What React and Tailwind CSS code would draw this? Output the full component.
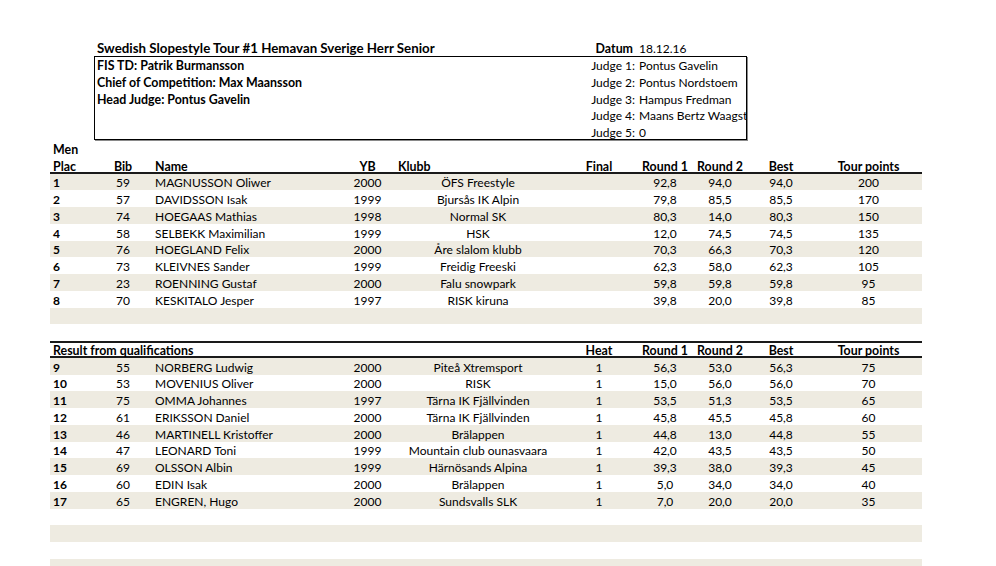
import React from 'react';

const COLS = 'grid grid-cols-[44px_58px_188px_55px_166px_76px_56px_54px_68px_107px]';
const ROW_H = 'h-[16.75px]';
const SHADE = 'bg-[#eeebe1]';

// Final round results
const finalRows = [
  { plac: 1, bib: 59, name: 'MAGNUSSON Oliwer', yb: 2000, club: 'ÖFS Freestyle', r1: '92,8', r2: '94,0', best: '94,0', pts: 200 },
  { plac: 2, bib: 57, name: 'DAVIDSSON Isak', yb: 1999, club: 'Bjursås IK Alpin', r1: '79,8', r2: '85,5', best: '85,5', pts: 170 },
  { plac: 3, bib: 74, name: 'HOEGAAS Mathias', yb: 1998, club: 'Normal SK', r1: '80,3', r2: '14,0', best: '80,3', pts: 150 },
  { plac: 4, bib: 58, name: 'SELBEKK Maximilian', yb: 1999, club: 'HSK', r1: '12,0', r2: '74,5', best: '74,5', pts: 135 },
  { plac: 5, bib: 76, name: 'HOEGLAND Felix', yb: 2000, club: 'Åre slalom klubb', r1: '70,3', r2: '66,3', best: '70,3', pts: 120 },
  { plac: 6, bib: 73, name: 'KLEIVNES Sander', yb: 1999, club: 'Freidig Freeski', r1: '62,3', r2: '58,0', best: '62,3', pts: 105 },
  { plac: 7, bib: 23, name: 'ROENNING Gustaf', yb: 2000, club: 'Falu snowpark', r1: '59,8', r2: '59,8', best: '59,8', pts: 95 },
  { plac: 8, bib: 70, name: 'KESKITALO Jesper', yb: 1997, club: 'RISK kiruna', r1: '39,8', r2: '20,0', best: '39,8', pts: 85 },
];

// Qualification results
const qualRows = [
  { plac: 9, bib: 55, name: 'NORBERG Ludwig', yb: 2000, club: 'Piteå Xtremsport', heat: 1, r1: '56,3', r2: '53,0', best: '56,3', pts: 75 },
  { plac: 10, bib: 53, name: 'MOVENIUS Oliver', yb: 2000, club: 'RISK', heat: 1, r1: '15,0', r2: '56,0', best: '56,0', pts: 70 },
  { plac: 11, bib: 75, name: 'OMMA Johannes', yb: 1997, club: 'Tärna IK Fjällvinden', heat: 1, r1: '53,5', r2: '51,3', best: '53,5', pts: 65 },
  { plac: 12, bib: 61, name: 'ERIKSSON Daniel', yb: 2000, club: 'Tärna IK Fjällvinden', heat: 1, r1: '45,8', r2: '45,5', best: '45,8', pts: 60 },
  { plac: 13, bib: 46, name: 'MARTINELL Kristoffer', yb: 2000, club: 'Brälappen', heat: 1, r1: '44,8', r2: '13,0', best: '44,8', pts: 55 },
  { plac: 14, bib: 47, name: 'LEONARD Toni', yb: 1999, club: 'Mountain club ounasvaara', heat: 1, r1: '42,0', r2: '43,5', best: '43,5', pts: 50 },
  { plac: 15, bib: 69, name: 'OLSSON Albin', yb: 1999, club: 'Härnösands Alpina', heat: 1, r1: '39,3', r2: '38,0', best: '39,3', pts: 45 },
  { plac: 16, bib: 60, name: 'EDIN Isak', yb: 2000, club: 'Brälappen', heat: 1, r1: '5,0', r2: '34,0', best: '34,0', pts: 40 },
  { plac: 17, bib: 65, name: 'ENGREN, Hugo', yb: 2000, club: 'Sundsvalls SLK', heat: 1, r1: '7,0', r2: '20,0', best: '20,0', pts: 35 },
];

const judges = [
  ['FIS TD: Patrik Burmansson', 'Judge 1:', 'Pontus Gavelin'],
  ['Chief of Competition: Max Maansson', 'Judge 2:', 'Pontus Nordstoem'],
  ['Head Judge: Pontus Gavelin', 'Judge 3:', 'Hampus Fredman'],
  ['', 'Judge 4:', 'Maans Bertz Waagst'],
  ['', 'Judge 5:', '0'],
];

const ResultRow = ({ row, shaded, showHeat }) => (
  <div className={`${COLS} ${ROW_H} items-end ${shaded ? SHADE : ''}`}>
    <div className="pl-[3px] font-bold">{row.plac}</div>
    <div className="text-center">{row.bib}</div>
    <div className="pl-[3px] whitespace-nowrap">{row.name}</div>
    <div className="text-center">{row.yb}</div>
    <div className="text-center whitespace-nowrap">{row.club}</div>
    <div className="text-center">{showHeat ? row.heat : ''}</div>
    <div className="text-center">{row.r1}</div>
    <div className="text-center">{row.r2}</div>
    <div className="text-center">{row.best}</div>
    <div className="text-center">{row.pts}</div>
  </div>
);

const EmptyRow = ({ shaded }) => <div className={`${ROW_H} ${shaded ? SHADE : ''}`} />;

const App = () => {
  return (
    <div className="min-h-screen bg-white text-black font-['Lato',sans-serif] text-[12px] leading-[15px] overflow-hidden">
      <div className="w-[872px] ml-[50px] pt-[39.67px]">
        {/* Title line */}
        <div className={`${COLS} ${ROW_H} items-end`}>
          <div />
          <div className="col-span-4 pl-[3px] font-bold text-[13.3px] whitespace-nowrap">
            Swedish Slopestyle Tour #1 Hemavan Sverige Herr Senior
          </div>
          <div className="text-right pr-[4px] font-bold text-[12.4px]">Datum</div>
          <div className="col-span-2 pl-[2px]">18.12.16</div>
        </div>

        {/* Officials box */}
        <div className="ml-[44px] w-[653px] shadow-[inset_0_0_0_1px_#000,1px_1px_0_#8a8a8a]">
          {judges.map(([left, label, name], i) => (
            <div key={i} className={`grid grid-cols-[467px_76px_110px] ${ROW_H} items-end`}>
              <div className="pl-[3px] font-bold text-[12.4px] whitespace-nowrap">{left}</div>
              <div className="text-right pr-[2px] whitespace-nowrap">{label}</div>
              <div className="pl-[2px] whitespace-nowrap overflow-hidden">{name}</div>
            </div>
          ))}
        </div>

        {/* Final */}
        <div className={`${ROW_H} flex items-end pl-[3px] font-bold text-[12.4px]`}>Men</div>
        <div className={`${COLS} ${ROW_H} items-end font-bold text-[12.4px] shadow-[inset_0_-2px_0_#1a1a1a]`}>
          <div className="pl-[3px]">Plac</div>
          <div className="text-center">Bib</div>
          <div className="pl-[3px]">Name</div>
          <div className="text-center">YB</div>
          <div className="pl-[3px]">Klubb</div>
          <div className="text-center">Final</div>
          <div className="text-center">Round 1</div>
          <div className="text-center">Round 2</div>
          <div className="text-center">Best</div>
          <div className="text-center">Tour points</div>
        </div>
        {finalRows.map((r, i) => (
          <ResultRow key={r.plac} row={r} shaded={i % 2 === 0} />
        ))}
        <EmptyRow shaded />
        <EmptyRow />

        {/* Qualifications */}
        <div className={`${COLS} ${ROW_H} items-end font-bold text-[12.4px] shadow-[inset_0_2px_0_#1a1a1a,inset_0_-2px_0_#1a1a1a]`}>
          <div className="col-span-4 pl-[3px] whitespace-nowrap">Result from qualifications</div>
          <div />
          <div className="text-center">Heat</div>
          <div className="text-center">Round 1</div>
          <div className="text-center">Round 2</div>
          <div className="text-center">Best</div>
          <div className="text-center">Tour points</div>
        </div>
        {qualRows.map((r, i) => (
          <ResultRow key={r.plac} row={r} shaded={i % 2 === 0} showHeat />
        ))}
        <EmptyRow />
        <EmptyRow shaded />
        <EmptyRow />
        <EmptyRow shaded />
      </div>
    </div>
  );
};

export default App;
